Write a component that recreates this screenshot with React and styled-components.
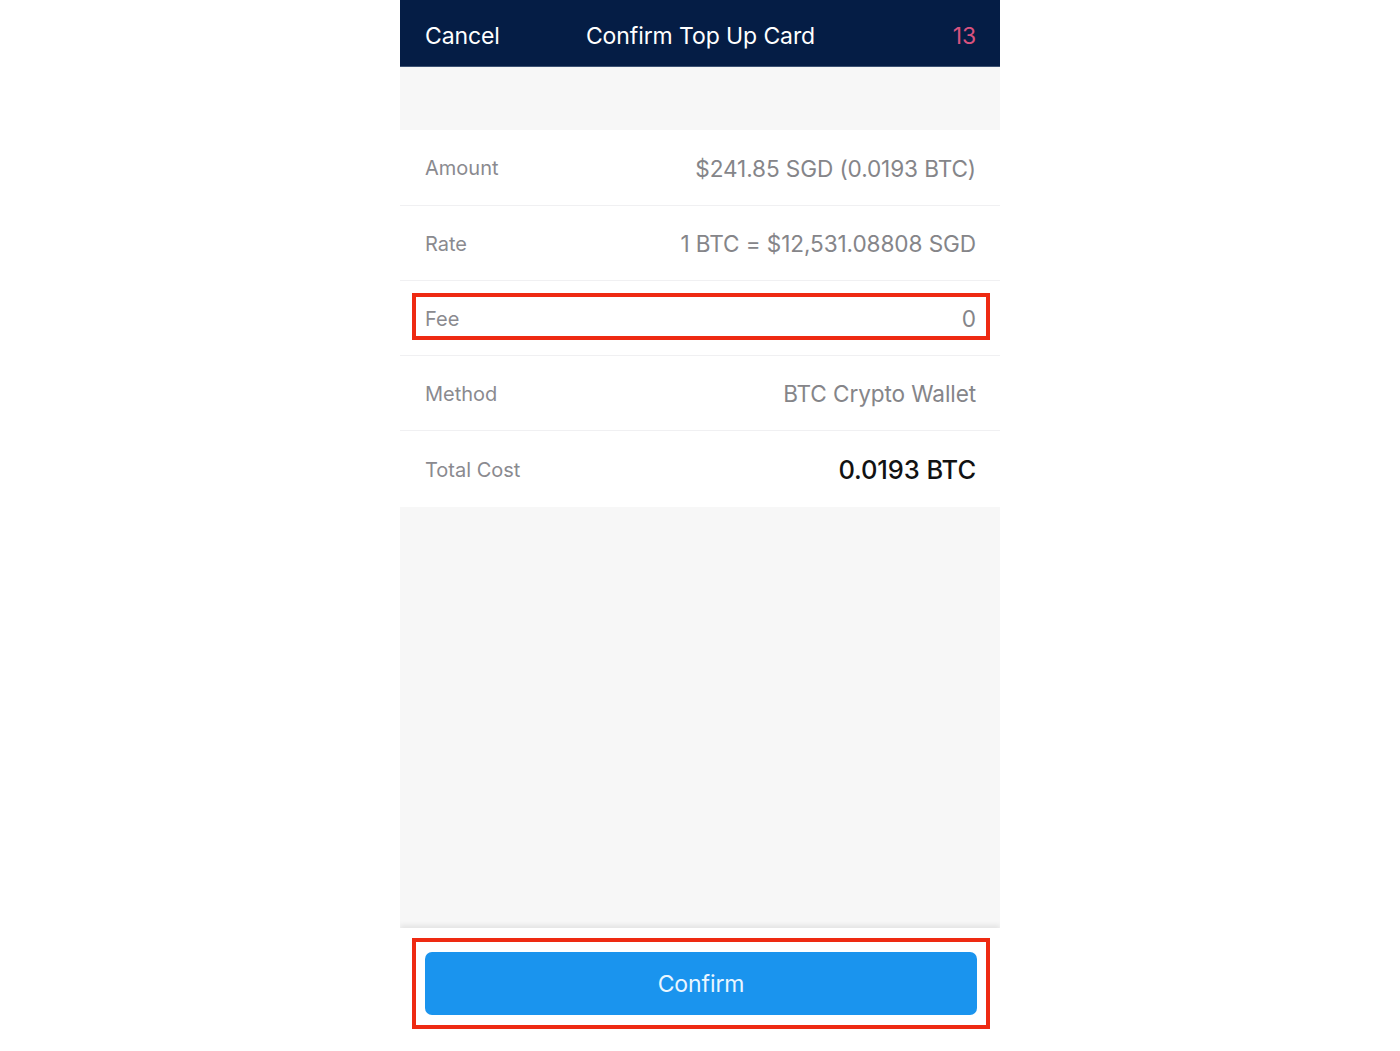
import React from "react";
import styled, { createGlobalStyle } from "styled-components";

const Global = createGlobalStyle`
  html, body { margin: 0; padding: 0; background: #ffffff; }
  body { font-family: Inter, "Open Sans", "Liberation Sans", sans-serif; }
  * { box-sizing: border-box; }
`;

const Phone = styled.div`
  width: 600px;
  height: 1051px;
  margin: 0 auto;
  display: flex;
  flex-direction: column;
  background: #f7f7f7;
  overflow: hidden;
`;

const NavBar = styled.header`
  height: 67px;
  flex: none;
  background: #051d45;
  display: grid;
  grid-template-columns: 1fr auto 1fr;
  align-items: center;
  padding: 6px 24px 0 25px;
  border-bottom: 1px solid #3d5273;
`;

const NavText = styled.span`
  font-size: 23px;
  letter-spacing: -0.1px;
  color: ${(p) => p.$color || "#ffffff"};
  justify-self: ${(p) => p.$align || "center"};
`;

const TopGap = styled.div`
  height: 63px;
  flex: none;
`;

const List = styled.div`
  background: #ffffff;
  display: flex;
  flex-direction: column;
`;

const Row = styled.div`
  height: ${(p) => p.$h || 75}px;
  display: flex;
  align-items: center;
  position: relative;
  border-top: ${(p) => (p.$first ? "none" : "1px solid #f0f0f2")};
  padding: 1px 24px 0 25px;
`;

const Label = styled.span`
  font-size: 20px;
  color: #8a8a8f;
  flex: 1;
`;

const Value = styled.span`
  font-size: ${(p) => (p.$strong ? 25.5 : 22.6)}px;
  color: ${(p) => (p.$strong ? "#121212" : "#858589")};
  font-weight: ${(p) => (p.$strong ? 500 : 400)};
  letter-spacing: -0.1px;
`;

const Highlight = styled.div`
  position: absolute;
  left: 12px;
  right: 10px;
  top: ${(p) => p.$top}px;
  bottom: ${(p) => p.$bottom}px;
  border: 4px solid #ee2a12;
  pointer-events: none;
`;

const Spacer = styled.div`
  flex: 1;
`;

const Footer = styled.footer`
  flex: none;
  height: 123px;
  background: #ffffff;
  position: relative;
  padding: 24px 23px 36px 25px;
  box-shadow: 0 -3px 5px rgba(0, 0, 0, 0.08);
`;

const ConfirmButton = styled.button`
  width: 100%;
  height: 63px;
  border: none;
  border-radius: 7px;
  background: #1a94ee;
  color: #e9f6ff;
  font-family: inherit;
  font-size: 23px;
  letter-spacing: -0.1px;
  cursor: pointer;
`;

const rows = [
  { label: "Amount", value: "$241.85 SGD (0.0193 BTC)" },
  { label: "Rate", value: "1 BTC = $12,531.08808 SGD" },
  { label: "Fee", value: "0", highlight: true },
  { label: "Method", value: "BTC Crypto Wallet" },
  { label: "Total Cost", value: "0.0193 BTC", strong: true, h: 77 },
];

export default function App() {
  return (
    <>
      <Global />
      <Phone>
        <NavBar>
          <NavText $align="start">Cancel</NavText>
          <NavText>Confirm Top Up Card</NavText>
          <NavText $align="end" $color="#d9527e">13</NavText>
        </NavBar>
        <TopGap />
        <List>
          {rows.map((r, i) => (
            <Row key={r.label} $first={i === 0} $h={r.h}>
              <Label>{r.label}</Label>
              <Value $strong={r.strong}>{r.value}</Value>
              {r.highlight && <Highlight $top={12} $bottom={15} />}
            </Row>
          ))}
        </List>
        <Spacer />
        <Footer>
          <ConfirmButton>Confirm</ConfirmButton>
          <Highlight $top={10} $bottom={22} />
        </Footer>
      </Phone>
    </>
  );
}
